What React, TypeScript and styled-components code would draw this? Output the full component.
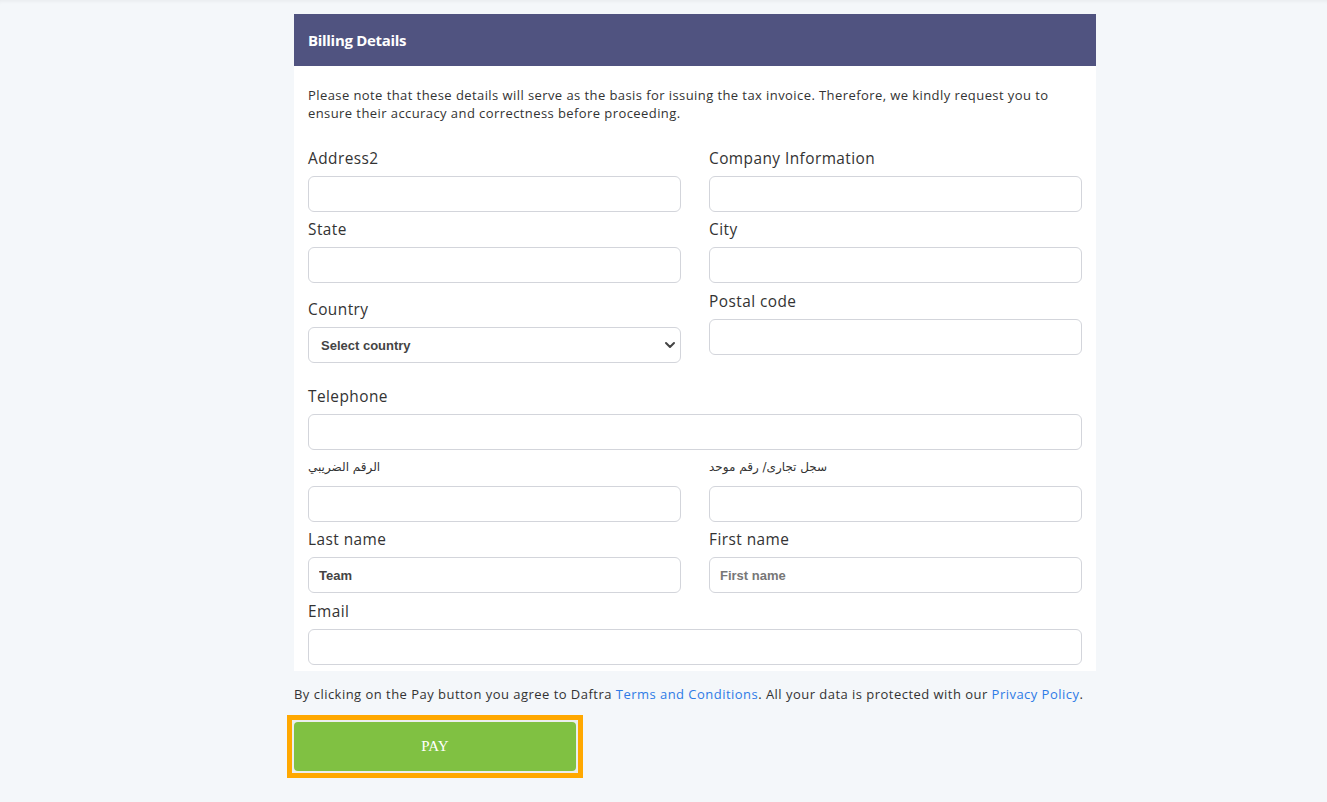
import React, { useState } from 'react';
import styled, { createGlobalStyle } from 'styled-components';

const GlobalStyle = createGlobalStyle`
  * {
    box-sizing: border-box;
  }

  body {
    margin: 0;
    background: #f4f7fa;
    font-family: 'Open Sans', 'DejaVu Sans', sans-serif;
    color: #333;
  }
`;

const Page = styled.div`
  min-height: 802px;
  padding: 14px 0 24px 294px;
  box-shadow: inset 0 4px 4px -3px rgba(0, 0, 0, 0.06);
`;

const Column = styled.div`
  width: 802px;
`;

const Card = styled.div`
  background: #fff;
`;

const CardHeader = styled.div`
  height: 52px;
  display: flex;
  align-items: center;
  padding: 0 14px;
  background: #505380;
  color: #fff;
  font-size: 15px;
  font-weight: 700;
  letter-spacing: -0.3px;
`;

const CardBody = styled.div`
  padding: 20px 14px 6px;
`;

const Note = styled.p`
  margin: 0 0 26px;
  font-size: 13px;
  line-height: 18px;
  letter-spacing: 0.42px;
  color: #333;
`;

const Row = styled.div<{ $top?: number }>`
  display: grid;
  grid-template-columns: 1fr 1fr;
  column-gap: 28px;
  align-items: start;
  margin-top: ${(p) => p.$top ?? 7}px;

  &:first-of-type {
    margin-top: 0;
  }
`;

const Field = styled.div<{ $full?: boolean; $offset?: number }>`
  display: flex;
  flex-direction: column;
  grid-column: ${(p) => (p.$full ? '1 / -1' : 'auto')};
  margin-top: ${(p) => p.$offset ?? 0}px;
`;

const Label = styled.label<{ $arabic?: boolean }>`
  display: block;
  font-size: ${(p) => (p.$arabic ? '12px' : '15.4px')};
  line-height: ${(p) => (p.$arabic ? '18px' : '22px')};
  letter-spacing: ${(p) => (p.$arabic ? '0' : '0.45px')};
  margin-bottom: ${(p) => (p.$arabic ? '10px' : '6px')};
  font-family: ${(p) =>
    p.$arabic ? "'DejaVu Sans', sans-serif" : "'Open Sans', 'DejaVu Sans', sans-serif"};
  direction: ${(p) => (p.$arabic ? 'rtl' : 'ltr')};
  color: #333;
  align-self: flex-start;
`;

const Input = styled.input`
  width: 100%;
  height: 36px;
  padding: 0 10px;
  border: 1px solid #d3d5db;
  border-radius: 6px;
  background: #fff;
  font-family: 'Liberation Sans', Arial, sans-serif;
  font-size: 13px;
  font-weight: 700;
  color: #444;
  outline: none;

  &::placeholder {
    color: #777;
    opacity: 1;
  }
`;

const SelectWrap = styled.div`
  position: relative;
`;

const Select = styled.select`
  width: 100%;
  height: 36px;
  padding: 0 12px;
  border: 1px solid #d3d5db;
  border-radius: 6px;
  background: #fff;
  font-family: 'Liberation Sans', Arial, sans-serif;
  font-size: 13px;
  font-weight: 700;
  color: #444;
  appearance: none;
  outline: none;
`;

const Chevron = styled.svg`
  position: absolute;
  right: 5px;
  top: 13px;
  pointer-events: none;
`;

const Terms = styled.p`
  margin: 14px 0 0;
  font-size: 13px;
  line-height: 18px;
  letter-spacing: 0.47px;
  color: #333;
`;

const Link = styled.a`
  color: #2e7be6;
  text-decoration: none;
`;

// square orange focus frame round the button
const PayFrame = styled.div`
  display: inline-block;
  margin: 12px 0 0 -7px;
  padding: 2px;
  border: 5px solid #ffa800;
  background: #eceeef;
`;

const PayButton = styled.button`
  display: block;
  width: 282px;
  height: 49px;
  border: none;
  border-radius: 4px;
  background: #80c142;
  color: #fff;
  font-family: 'Liberation Serif', 'Times New Roman', serif;
  font-size: 15px;
  cursor: pointer;
`;

const App: React.FC = () => {
  const [lastName, setLastName] = useState<string>('Team');

  return (
    <>
      <GlobalStyle />
      <Page>
        <Column>
          <Card>
            <CardHeader>Billing Details</CardHeader>
            <CardBody>
              <Note>
                Please note that these details will serve as the basis for issuing the tax
                invoice. Therefore, we kindly request you to ensure their accuracy and
                correctness before proceeding.
              </Note>

              <Row>
                <Field>
                  <Label>Address2</Label>
                  <Input type='text' />
                </Field>
                <Field>
                  <Label>Company Information</Label>
                  <Input type='text' />
                </Field>
              </Row>

              <Row>
                <Field>
                  <Label>State</Label>
                  <Input type='text' />
                </Field>
                <Field>
                  <Label>City</Label>
                  <Input type='text' />
                </Field>
              </Row>

              <Row $top={8}>
                <Field $offset={8}>
                  <Label>Country</Label>
                  <SelectWrap>
                    <Select defaultValue=''>
                      <option value=''>Select country</option>
                    </Select>
                    <Chevron width='12' height='10' viewBox='0 0 12 10'>
                      <path
                        d='M2 3l4 4 4-4'
                        fill='none'
                        stroke='#444'
                        strokeWidth='2'
                        strokeLinecap='round'
                        strokeLinejoin='round'
                      />
                    </Chevron>
                  </SelectWrap>
                </Field>
                <Field>
                  <Label>Postal code</Label>
                  <Input type='text' />
                </Field>
              </Row>

              <Row $top={23}>
                <Field $full>
                  <Label>Telephone</Label>
                  <Input type='tel' />
                </Field>
              </Row>

              <Row $top={8}>
                <Field>
                  <Label $arabic>الرقم الضريبي</Label>
                  <Input type='text' />
                </Field>
                <Field>
                  <Label $arabic>سجل تجارى/ رقم موحد</Label>
                  <Input type='text' />
                </Field>
              </Row>

              <Row>
                <Field>
                  <Label>Last name</Label>
                  <Input
                    type='text'
                    value={lastName}
                    onChange={(e: React.ChangeEvent<HTMLInputElement>) =>
                      setLastName(e.target.value)
                    }
                  />
                </Field>
                <Field>
                  <Label>First name</Label>
                  <Input type='text' placeholder='First name' />
                </Field>
              </Row>

              <Row $top={8}>
                <Field $full>
                  <Label>Email</Label>
                  <Input type='email' />
                </Field>
              </Row>
            </CardBody>
          </Card>

          <Terms>
            By clicking on the Pay button you agree to Daftra{' '}
            <Link href='#'>Terms and Conditions</Link>. All your data is protected with our{' '}
            <Link href='#'>Privacy Policy</Link>.
          </Terms>

          <PayFrame>
            <PayButton type='button'>PAY</PayButton>
          </PayFrame>
        </Column>
      </Page>
    </>
  );
};

export default App;
